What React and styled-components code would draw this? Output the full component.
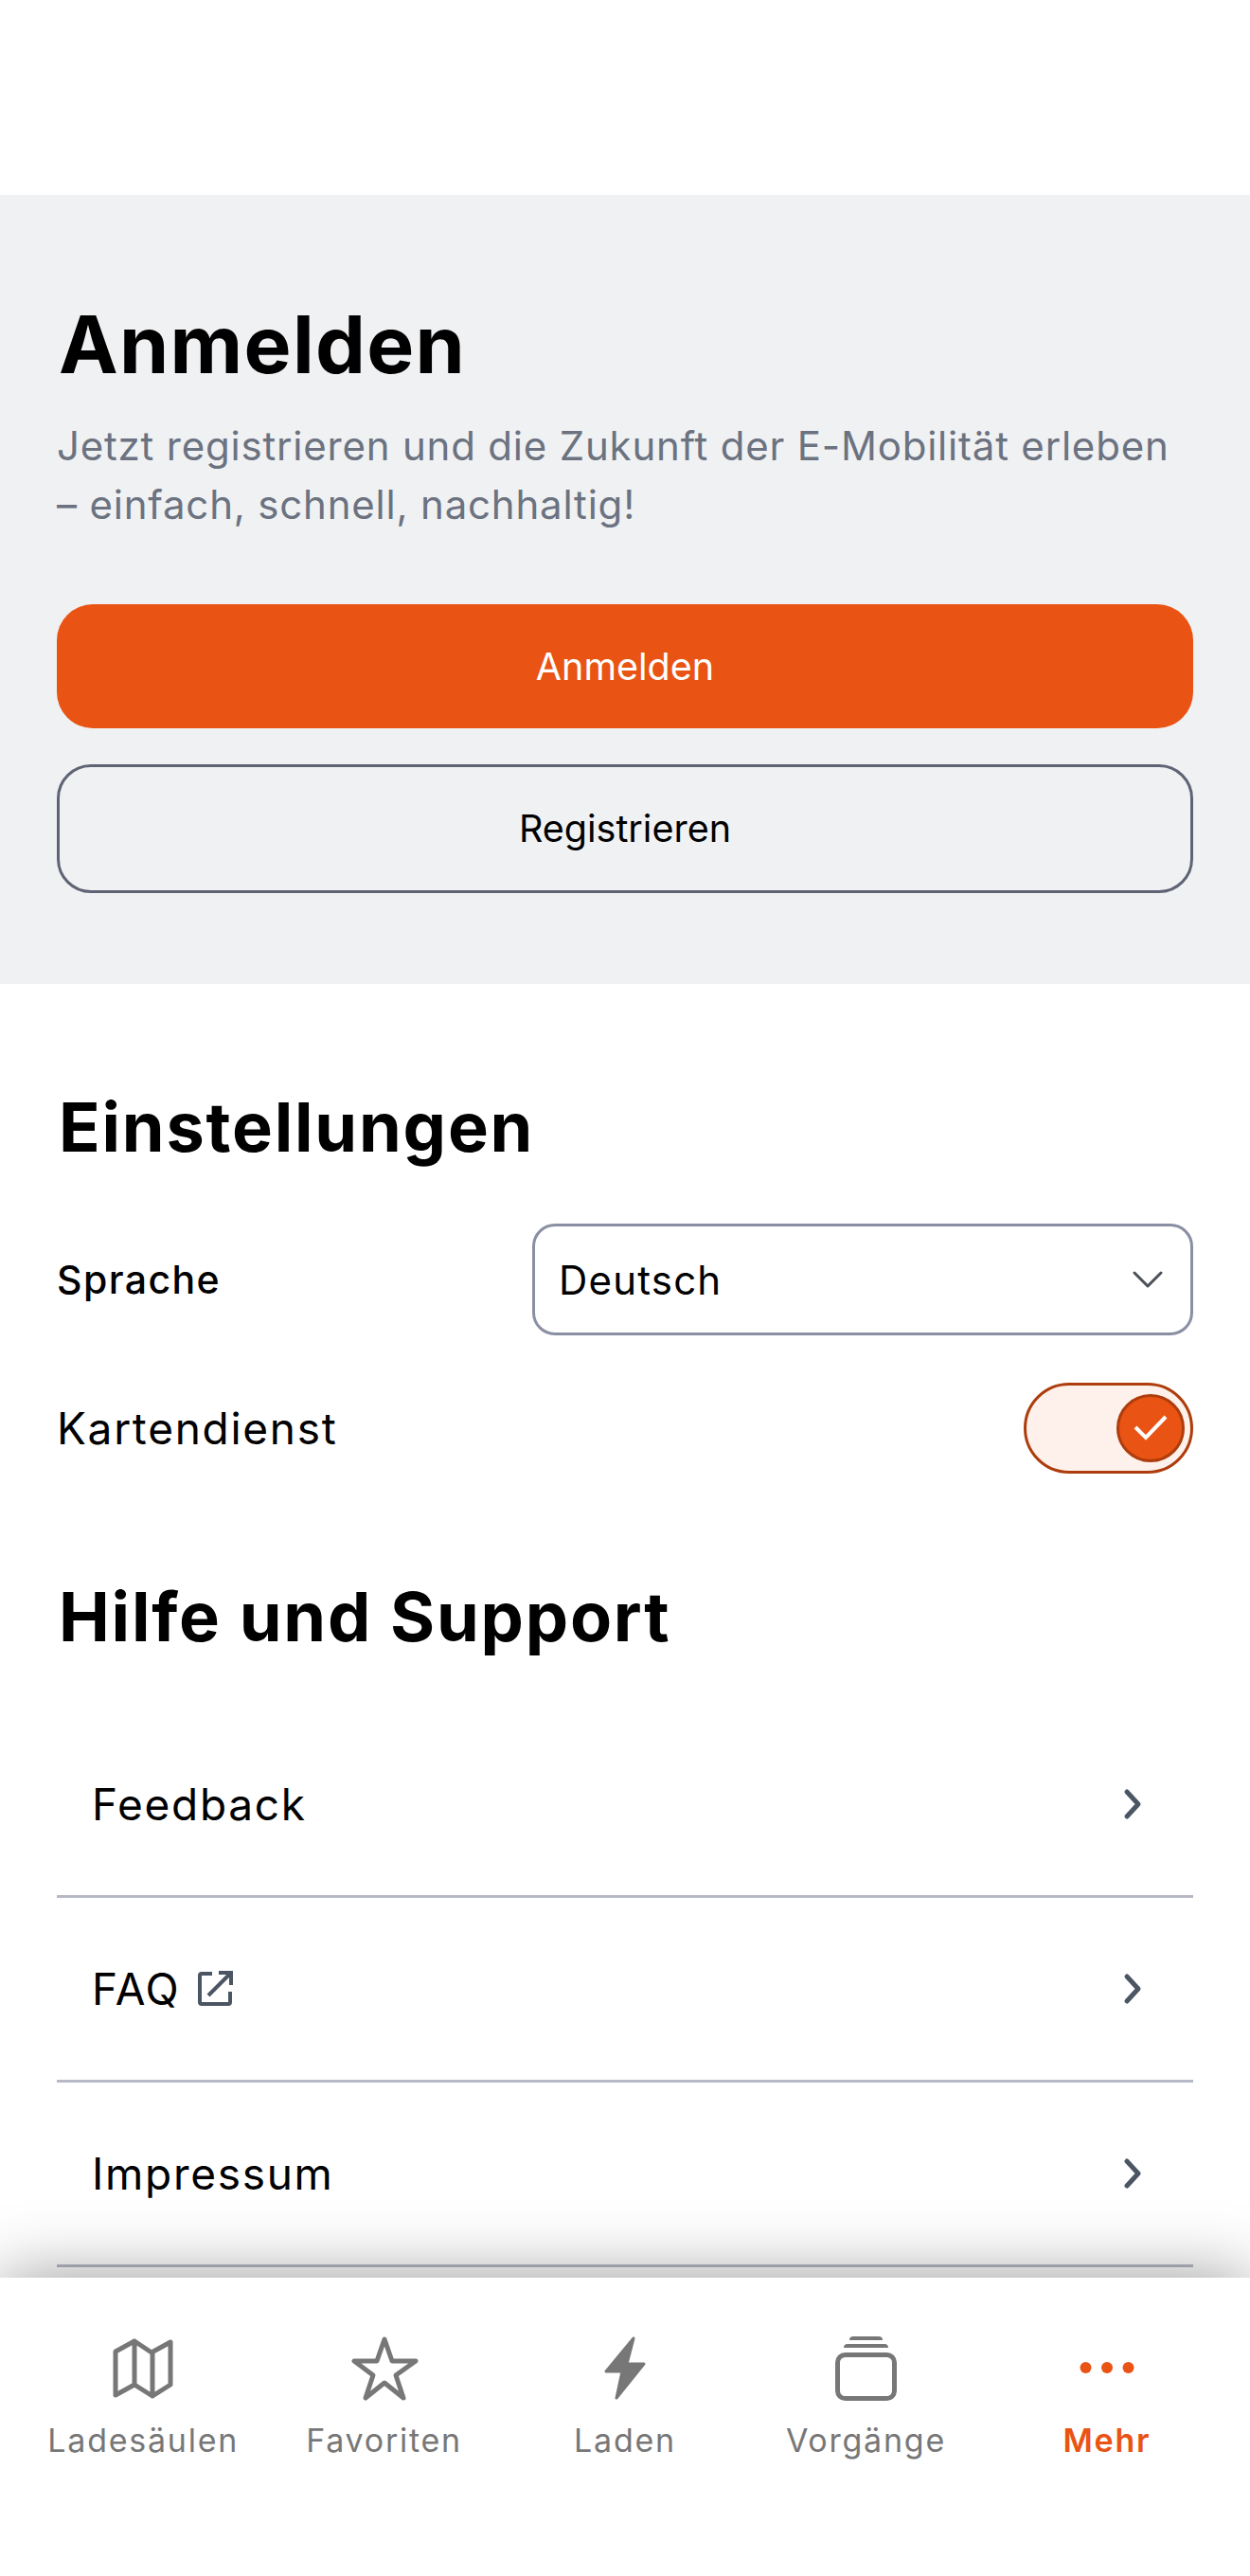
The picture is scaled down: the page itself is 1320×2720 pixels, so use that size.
import React from 'react'
import styled, { createGlobalStyle } from 'styled-components'

const GlobalStyle = createGlobalStyle`
  html, body {
    margin: 0;
    padding: 0;
    background: #fff;
    font-family: Inter, "Liberation Sans", sans-serif;
  }
`

const Page = styled.div`
  display: flex;
  flex-direction: column;
  width: 1320px;
  height: 2720px;
  overflow: hidden;
  background: #fff;
`
const Content = styled.main`
  flex: 1;
  min-height: 0;
  overflow: hidden;
  padding-top: 206px;
`
const LoginPanel = styled.section`
  display: flex;
  flex-direction: column;
  height: 833px;
  box-sizing: border-box;
  padding: 114px 60px 0;
  background: #f0f1f3;
`
const Title = styled.h1`
  margin: 0 0 0 2px;
  font-size: 84px;
  line-height: 88px;
  font-weight: 700;
  letter-spacing: 1.3px;
  color: #000;
`
const Intro = styled.p`
  margin: 32px 0 0;
  font-size: 42px;
  line-height: 62px;
  font-weight: 400;
  letter-spacing: 0.8px;
  color: #6b7280;
`
const PrimaryButton = styled.button`
  margin-top: 74px;
  width: 100%;
  height: 131px;
  border: none;
  border-radius: 38px;
  background: #e95313;
  color: #fff;
  font: 400 39.5px Inter, sans-serif;
`
const SecondaryButton = styled.button`
  margin-top: 38px;
  width: 100%;
  height: 136px;
  border: 3px solid #5f6475;
  border-radius: 36px;
  background: transparent;
  color: #000;
  font: 400 39.5px Inter, sans-serif;
`
const Section = styled.section`
  padding: 0 60px;
`
const SectionTitle = styled.h2`
  margin: ${props => props.$top}px 0 0 2px;
  font-size: 72px;
  line-height: 84px;
  font-weight: 700;
  letter-spacing: 1.8px;
  color: #000;
`
const SettingRow = styled.div`
  display: flex;
  align-items: center;
  justify-content: space-between;
  margin-top: ${props => props.$top}px;
`
const SettingLabel = styled.span`
  font-size: ${props => (props.$strong ? 41 : 46)}px;
  font-weight: ${props => (props.$strong ? 500 : 400)};
  letter-spacing: ${props => (props.$strong ? 1.4 : 1.7)}px;
  color: #000;
`
const Select = styled.div`
  display: flex;
  align-items: center;
  justify-content: space-between;
  width: 698px;
  height: 118px;
  box-sizing: border-box;
  padding: 0 29px 0 25px;
  border: 3px solid #8a8fa3;
  border-radius: 24px;
  font-size: 42px;
  letter-spacing: 1.2px;
  color: #000;
`
const Toggle = styled.div`
  display: flex;
  align-items: center;
  justify-content: flex-end;
  width: 179px;
  height: 96px;
  box-sizing: border-box;
  padding-right: 6px;
  border: 3px solid #ad3d0c;
  border-radius: 48px;
  background: #fef0ea;
`
const Knob = styled.div`
  display: flex;
  align-items: center;
  justify-content: center;
  width: 72px;
  height: 72px;
  box-sizing: border-box;
  border: 3px solid #ad3d0c;
  border-radius: 50%;
  background: #e95313;
`
const LinkList = styled.div`
  margin-top: 60px;
`
const LinkRow = styled.div`
  display: flex;
  align-items: center;
  justify-content: space-between;
  height: 195px;
  box-sizing: border-box;
  padding: 0 52px 0 37px;
  border-bottom: 3px solid #b7bac6;
`
const LinkLabel = styled.span`
  display: flex;
  align-items: center;
  gap: 18px;
  font-size: 46px;
  letter-spacing: 1.7px;
  color: #000;
`
const TabBar = styled.nav`
  position: relative;
  display: flex;
  flex: none;
  height: 315px;
  box-sizing: border-box;
  padding: 59px 24px 0;
  background: #fff;
  box-shadow: 0 0 68px rgba(0, 0, 0, 0.4);
`
const Tab = styled.div`
  display: flex;
  flex: 1;
  flex-direction: column;
  align-items: center;
  color: ${props => (props.$active ? '#e95313' : '#777')};
`
const TabLabel = styled.span`
  margin-top: 21px;
  font-size: 34px;
  line-height: 40px;
  font-weight: ${props => (props.$active ? 600 : 400)};
  letter-spacing: 1.75px;
`
const TabIcon = styled.svg`
  display: block;
  width: 72px;
  height: 72px;
  fill: none;
  stroke: currentColor;
  stroke-width: 5;
  stroke-linejoin: round;
  stroke-linecap: round;
`

const MapIcon = () => (
  <TabIcon viewBox="0 0 72 72">
    <path d="M7 19 27 8 45 20 65 9V54L46 66 27 54 7 65ZM27 8V54M46 20V66" />
  </TabIcon>
)
const StarIcon = () => (
  <TabIcon viewBox="0 0 72 72">
    <path d="M36 6 44 29H69L48 44 56 68 36 52 16 68 24 44 4 29H28Z" />
  </TabIcon>
)
const BoltIcon = () => (
  <TabIcon viewBox="0 0 72 72">
    <path fill="currentColor" strokeWidth="3" d="M45 5 16 40H33L27 68 56 32H38Z" />
  </TabIcon>
)
const StackIcon = () => (
  <TabIcon viewBox="0 0 72 72">
    <rect x="6.5" y="22.5" width="60" height="46" rx="8" />
    <path fill="currentColor" stroke="none" d="M13 15a4 4 0 0 1 4-4H56a4 4 0 0 1 4 4H13ZM19 7a4 4 0 0 1 4-4H50a4 4 0 0 1 4 4H19Z" />
  </TabIcon>
)
const MoreIcon = () => (
  <TabIcon viewBox="0 0 72 72">
    <g fill="currentColor" stroke="none">
      <circle cx="13.5" cy="36" r="6" />
      <circle cx="36" cy="36" r="6" />
      <circle cx="58.5" cy="36" r="6" />
    </g>
  </TabIcon>
)
const ChevronDown = () => (
  <svg width="32" height="20" viewBox="0 0 32 20" fill="none" stroke="#4b4f58" strokeWidth="3" strokeLinecap="round" strokeLinejoin="round">
    <path d="M2 3 16 17 30 3" />
  </svg>
)
const ChevronRight = () => (
  <svg width="24" height="36" viewBox="0 0 24 36" fill="none" stroke="#4b5563" strokeWidth="5" strokeLinecap="round" strokeLinejoin="round">
    <path d="M6 5 18 18 6 31" />
  </svg>
)
const CheckIcon = () => (
  <svg width="40" height="32" viewBox="0 0 40 32" fill="none" stroke="#fff" strokeWidth="4">
    <path d="M4 15 15 26 36 4" />
  </svg>
)
const ExternalIcon = () => (
  <svg width="38" height="38" viewBox="0 0 38 38" fill="none" stroke="#4b5563" strokeWidth="4">
    <path d="M16 3H5a2 2 0 0 0-2 2V33a2 2 0 0 0 2 2H33a2 2 0 0 0 2-2V22" />
    <path d="M12 26 35 3M23 2H36V15" />
  </svg>
)

const links = [
  { label: 'Feedback' },
  { label: 'FAQ', external: true },
  { label: 'Impressum' },
]

const tabs = [
  { label: 'Ladesäulen', Icon: MapIcon },
  { label: 'Favoriten', Icon: StarIcon },
  { label: 'Laden', Icon: BoltIcon },
  { label: 'Vorgänge', Icon: StackIcon },
  { label: 'Mehr', Icon: MoreIcon, active: true },
]

const App = () => (
  <Page>
    <GlobalStyle />
    <Content>
      <LoginPanel>
        <Title>Anmelden</Title>
        <Intro>Jetzt registrieren und die Zukunft der E-Mobilität erleben – einfach, schnell, nachhaltig!</Intro>
        <PrimaryButton>Anmelden</PrimaryButton>
        <SecondaryButton>Registrieren</SecondaryButton>
      </LoginPanel>
      <Section>
        <SectionTitle $top={109}>Einstellungen</SectionTitle>
        <SettingRow $top={60}>
          <SettingLabel $strong>Sprache</SettingLabel>
          <Select>
            Deutsch
            <ChevronDown />
          </Select>
        </SettingRow>
        <SettingRow $top={50}>
          <SettingLabel>Kartendienst</SettingLabel>
          <Toggle>
            <Knob>
              <CheckIcon />
            </Knob>
          </Toggle>
        </SettingRow>
        <SectionTitle $top={109}>Hilfe und Support</SectionTitle>
        <LinkList>
          {links.map(link => (
            <LinkRow key={link.label}>
              <LinkLabel>
                {link.label}
                {link.external && <ExternalIcon />}
              </LinkLabel>
              <ChevronRight />
            </LinkRow>
          ))}
        </LinkList>
      </Section>
    </Content>
    <TabBar>
      {tabs.map(({ label, Icon, active }) => (
        <Tab key={label} $active={active}>
          <Icon />
          <TabLabel $active={active}>{label}</TabLabel>
        </Tab>
      ))}
    </TabBar>
  </Page>
)

export default App
